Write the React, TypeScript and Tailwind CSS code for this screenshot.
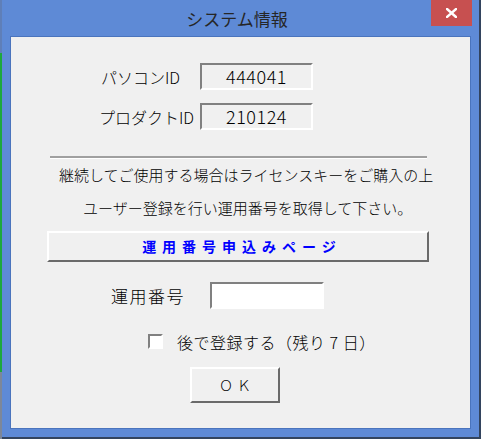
const jp = { fontFamily: '"Noto Sans CJK JP", "Noto Sans", sans-serif' };

function Sunken({ className = "", children }: { className?: string; children?: React.ReactNode }) {
  return (
    <div
      className={`flex items-center justify-center border-2 border-t-[#808080] border-l-[#808080] border-b-white border-r-white ${className}`}
    >
      {children}
    </div>
  );
}

function Raised({ className = "", children }: { className?: string; children?: React.ReactNode }) {
  return (
    <div
      className={`flex items-center justify-center border-2 border-t-white border-l-white border-b-[#6a6a6a] border-r-[#6a6a6a] ${className}`}
    >
      {children}
    </div>
  );
}

export default function App() {
  return (
    <div className="flex h-[439px] w-[481px] bg-[#5e8ad6] font-light text-black" style={jp}>
      {/* screen edge behind the window */}
      <div className="flex w-[2px] flex-col">
        <div className="h-[53px] bg-[#5f7fb8]" />
        <div className="h-[319px] bg-[#1ea83c]" />
        <div className="flex-1 bg-[#7d8799]" />
      </div>

      <div className="flex flex-1 flex-col border-b-2 border-r-2 border-[#33445e]">
        {/* title bar */}
        <div className="flex h-[36px] items-start">
          <div className="flex-1" />
          <div className="pt-[6px] text-[17px] font-normal leading-[26px] text-[#262626]">システム情報</div>
          <div className="flex flex-1 justify-end pr-[7px]">
            <div className="flex h-[26px] w-[41px] items-center justify-center bg-[#c75050]">
              <svg width="11" height="10" viewBox="0 0 11 10">
                <path d="M1 1 L10 9 M10 1 L1 9" stroke="white" strokeWidth="2.4" strokeLinecap="square" />
              </svg>
            </div>
          </div>
        </div>

        {/* client area */}
        <div className="mx-[8px] mb-[8px] flex flex-1 flex-col border border-[#4a74bd] bg-[#f0f0f0]">
          <div className="ml-[90px] mt-[26px] flex h-[27px] items-center">
            <span className="w-[99px] text-[16px] leading-none">パソコンID</span>
            <Sunken className="h-[27px] w-[113px] text-[18px] tracking-[0.5px]">444041</Sunken>
          </div>
          <div className="ml-[88px] mt-[13px] flex h-[27px] items-center">
            <span className="w-[101px] text-[16px] leading-none">プロダクトID</span>
            <Sunken className="h-[27px] w-[113px] text-[18px] tracking-[0.5px]">210124</Sunken>
          </div>

          <div className="ml-[39px] mt-[26px] w-[377px] border-b border-t-2 border-b-white border-t-[#a0a0a0]" />

          <p className="mt-[6px] pl-[48px] text-[15px] leading-[20px]">
            継続してご使用する場合はライセンスキーをご購入の上
          </p>
          <p className="mt-[13px] pl-[72px] text-[15px] leading-[20px]">
            ユーザー登録を行い運用番号を取得して下さい。
          </p>

          <Raised className="ml-[36px] mt-[13px] h-[31px] w-[382px]">
            <span className="pl-[8px] text-[14px] font-bold tracking-[6px] text-[#0000ff]">運用番号申込みページ</span>
          </Raised>

          <div className="ml-[100px] mt-[20px] flex h-[27px] items-center">
            <span className="w-[99px] text-[17px] tracking-[1.5px]">運用番号</span>
            <Sunken className="h-[27px] w-[114px] bg-white" />
          </div>

          <div className="ml-[137px] mt-[25px] flex h-[15px] items-center">
            <Sunken className="h-[15px] w-[15px] bg-white" />
            <span className="ml-[14px] text-[16px] tracking-[0.5px]">後で登録する（残り 7 日）</span>
          </div>

          <Raised className="ml-[179px] mt-[18px] h-[36px] w-[90px]">
            <span className="pl-[4px] text-[14px] tracking-[4px]">ＯＫ</span>
          </Raised>
        </div>
      </div>
    </div>
  );
}
